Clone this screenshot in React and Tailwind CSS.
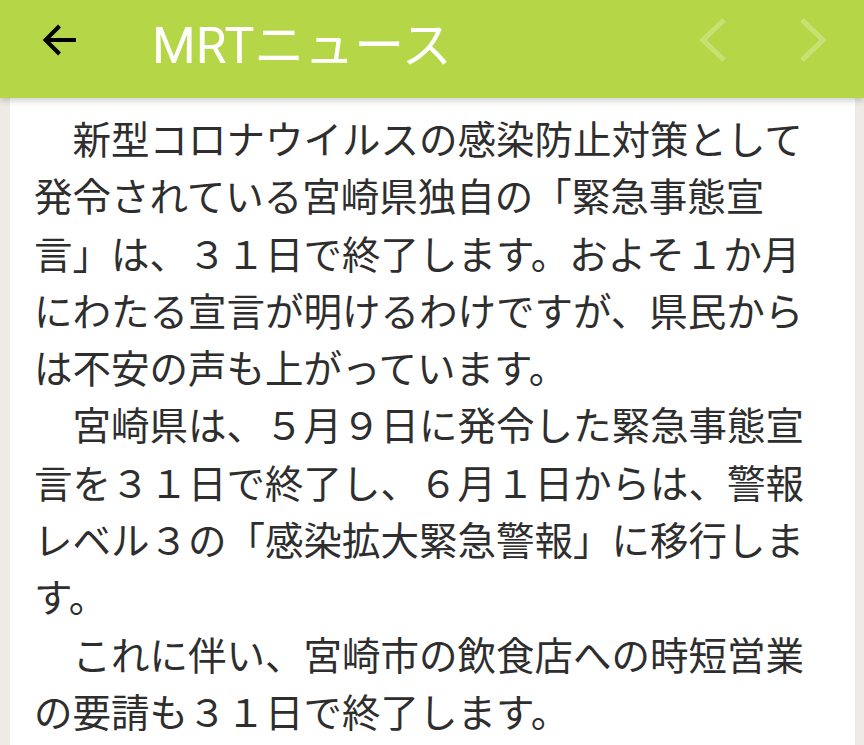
export default function App() {
  const lines = [
    '　新型コロナウイルスの感染防止対策として',
    '発令されている宮崎県独自の「緊急事態宣',
    '言」は、３１日で終了します。およそ１か月',
    'にわたる宣言が明けるわけですが、県民から',
    'は不安の声も上がっています。',
    '　宮崎県は、５月９日に発令した緊急事態宣',
    '言を３１日で終了し、６月１日からは、警報',
    'レベル３の「感染拡大緊急警報」に移行しま',
    'す。',
    '　これに伴い、宮崎市の飲食店への時短営業',
    'の要請も３１日で終了します。',
  ]

  return (
    <div className="flex h-[745px] flex-col overflow-hidden bg-[#eeebe6]">
      <header className="relative z-10 flex h-[98px] shrink-0 items-center bg-[#b5d747] pl-[42px] shadow-[0_3px_6px_rgba(0,0,0,0.18)]">
        <svg viewBox="0 0 34 34" className="mb-[19px] h-[34px] w-[34px]" fill="none" stroke="#000" strokeWidth="4">
          <path d="M34 17H4" />
          <path d="M17.5 3L3.5 17l14 14" />
        </svg>
        <h1 className="mb-[7px] ml-[76px] text-[50px] leading-[50px] text-white [font-family:Roboto,'Noto_Sans_CJK_JP',sans-serif]">
          MRTニュース
        </h1>
        <div className="mb-[18px] ml-auto mr-[36px] flex items-center gap-[70px]">
          <svg viewBox="0 0 30 44" className="h-[44px] w-[30px]" fill="none" stroke="rgba(255,255,255,0.25)" strokeWidth="5">
            <path d="M26 2L5 22l21 20" />
          </svg>
          <svg viewBox="0 0 30 44" className="h-[44px] w-[30px]" fill="none" stroke="rgba(255,255,255,0.25)" strokeWidth="5">
            <path d="M4 2l21 20L4 42" />
          </svg>
        </div>
      </header>
      <main className="ml-[10px] mr-[9px] flex-1 bg-white pl-[24px] pt-[11px] text-[38.5px] leading-[57.3px] text-[#2e2e2e] [font-family:'Noto_Sans_CJK_JP',sans-serif]">
        {lines.map((l, i) => (
          <div key={i} className="whitespace-nowrap">
            {l}
          </div>
        ))}
      </main>
    </div>
  )
}
